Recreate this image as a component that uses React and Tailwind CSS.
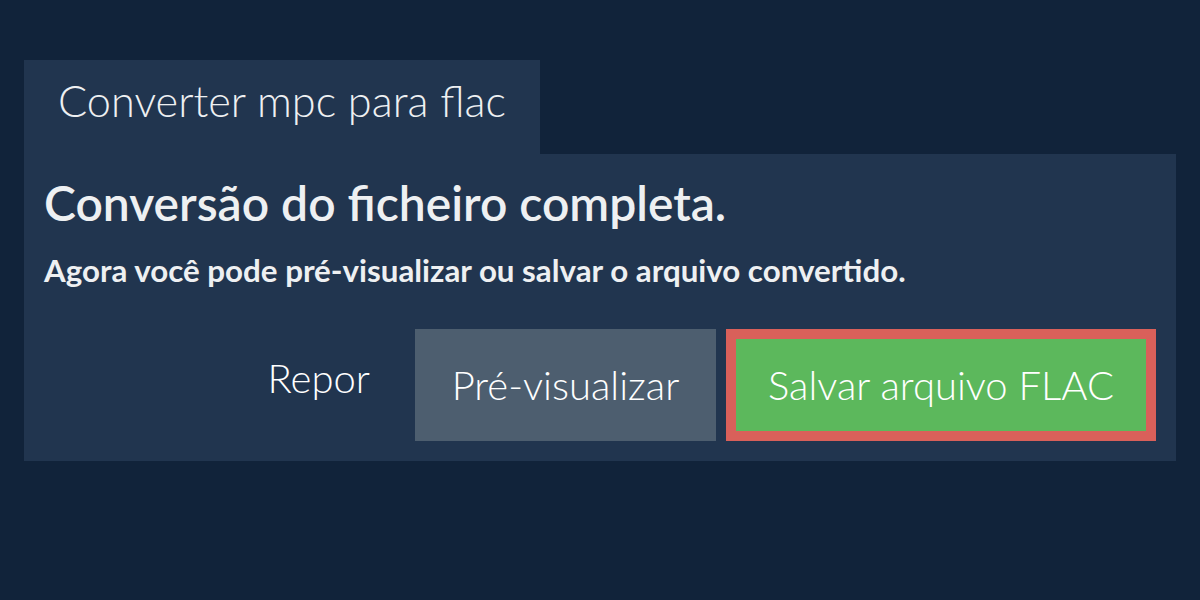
export default function App() {
  return (
    <div className="min-h-[600px] w-[1200px] bg-[#11233a] px-6 pt-[60px] font-['Lato',sans-serif] text-white">
      <div className="flex">
        <div className="h-[94px] w-[516px] bg-[#21354f] pl-[34px] pt-[19px]">
          <h1 className="text-[43.3px] font-light leading-none text-[#eef0f2]">Converter mpc para flac</h1>
        </div>
      </div>
      <div className="flex flex-col bg-[#21354f] px-5 pb-5 pt-[25px]">
        <h2 className="text-[48px] font-semibold leading-none text-[#eef0f2]">Conversão do ficheiro completa.</h2>
        <p className="mt-[28px] text-[31.3px] font-bold leading-none text-[#eef0f2]">
          Agora você pode pré-visualizar ou salvar o arquivo convertido.
        </p>
        <div className="mt-[43px] flex items-center justify-end gap-[10px]">
          <button className="mb-[14px] mr-[35px] text-[40px] font-light text-white">Repor</button>
          <button className="flex h-[112px] w-[301px] items-center justify-center bg-[#4d5e6f] text-[40px] font-light text-white">
            Pré-visualizar
          </button>
          <button className="flex h-[112px] w-[430px] items-center justify-center border-[10px] border-[#d9605a] bg-[#5cb85c] text-[40px] font-light text-white">
            Salvar arquivo FLAC
          </button>
        </div>
      </div>
    </div>
  );
}
